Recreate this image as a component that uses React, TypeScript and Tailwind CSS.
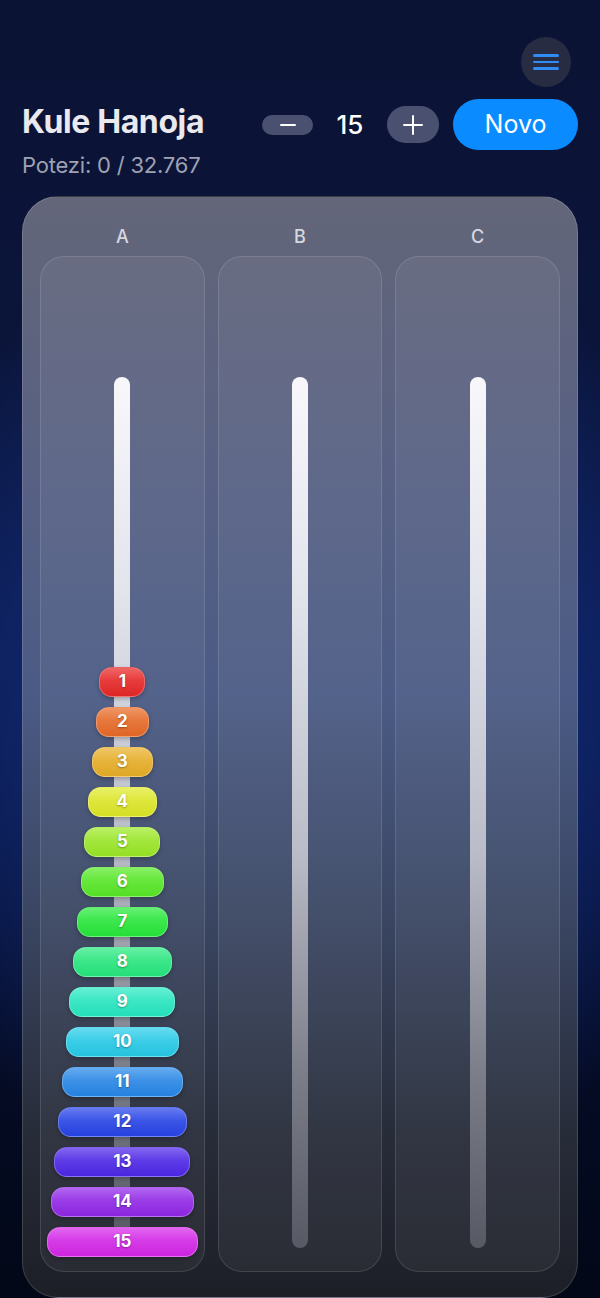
// Towers of Hanoi board: header with disc counter, three pegs, 15 discs on A.

const DISCS = Array.from({ length: 15 }, (_, i) => i + 1);
const PEGS = ["A", "B", "C"];

function Disc({ n }: { n: number }) {
  const hue = (n - 1) * 21;
  const width = 46 + (n - 1) * 7.5;
  return (
    <div
      className="relative flex h-[30px] items-center justify-center rounded-[13px] border text-[17px] font-bold text-white [text-shadow:0_1px_2px_rgba(0,0,0,0.35)]"
      style={{
        width,
        background: `linear-gradient(to bottom, hsl(${hue} 82% 67%), hsl(${hue} 78% 57%) 45%, hsl(${hue} 74% 51%))`,
        borderColor: `hsl(${hue} 85% 72% / 0.7)`,
        boxShadow: "0 2px 4px rgba(0,0,0,0.25)",
      }}
    >
      {n}
    </div>
  );
}

function Peg({ discs }: { discs: number[] }) {
  return (
    <div className="relative flex h-[1016px] flex-col items-center justify-end gap-[10px] rounded-[24px] border border-white/[0.12] bg-white/[0.05] pb-[14px]">
      {/* rod */}
      <div className="absolute left-1/2 top-[120px] bottom-[23px] w-4 -translate-x-1/2 rounded-full bg-[linear-gradient(to_bottom,#f8f8fb_0%,#e2e4ec_25%,#b9bcc7_55%,#7b7e89_80%,#575a64_100%)]" />
      {discs.map((n) => (
        <Disc key={n} n={n} />
      ))}
    </div>
  );
}

export default function App() {
  return (
    <div className="min-h-[1298px] w-full overflow-hidden bg-[radial-gradient(ellipse_75%_38%_at_50%_55%,#1a3a9a_0%,#112a78_45%,rgba(8,16,48,0)_100%),linear-gradient(to_bottom,#0b1334_0%,#0b1740_50%,#050c26_80%,#020817_100%)] px-[22px] pt-[37px] font-['Inter',sans-serif]">
      {/* ── Menu ── */}
      <div className="flex justify-end pr-[7px]">
        <button className="flex h-[50px] w-[50px] flex-col items-center justify-center gap-[4px] rounded-full bg-[#272c42]">
          <span className="h-[2.5px] w-[26px] rounded-full bg-[#2f8cf2]" />
          <span className="h-[2.5px] w-[26px] rounded-full bg-[#2f8cf2]" />
          <span className="h-[2.5px] w-[26px] rounded-full bg-[#2f8cf2]" />
        </button>
      </div>

      {/* ── Header ── */}
      <div className="mt-[12px] flex items-start justify-between">
        <div>
          <h1 className="mt-[4px] text-[32px] font-bold leading-[38px] tracking-[-0.4px] text-[#e9e9ee]">
            Kule Hanoja
          </h1>
          <p className="mt-[10px] text-[22px] leading-[28px] tracking-[-0.2px] text-[#9ea2b3]">
            Potezi: 0 / 32.767
          </p>
        </div>
        <div className="flex h-[51px] items-center">
          <button className="flex h-[20px] w-[51px] items-center justify-center rounded-full bg-[#4a5170]">
            <span className="h-[2px] w-[16px] rounded-full bg-white" />
          </button>
          <span className="w-[74px] text-center text-[26px] font-medium text-white">15</span>
          <button className="relative flex h-[37px] w-[52px] items-center justify-center rounded-full bg-[#4a5170]">
            <span className="h-[2px] w-[20px] rounded-full bg-white" />
            <span className="absolute h-[20px] w-[2px] rounded-full bg-white" />
          </button>
          <button className="ml-[14px] h-[51px] w-[125px] rounded-full bg-[#0a8bff] text-[25px] text-white">
            Novo
          </button>
        </div>
      </div>

      {/* ── Board ── */}
      <div className="mt-[17px] rounded-[36px] border border-white/[0.14] bg-[linear-gradient(to_bottom,#636679_0%,#586184_25%,#4b5b85_45%,#3a4663_65%,#272c39_85%,#1d1f27_100%)] px-[17px] pt-[30px] pb-[25px]">
        <div className="grid grid-cols-3 gap-[13px]">
          {PEGS.map((p) => (
            <div key={p} className="text-center text-[18px] font-medium leading-[20px] text-[#d6d8e0]">
              {p}
            </div>
          ))}
        </div>
        <div className="mt-[9px] grid grid-cols-3 gap-[13px]">
          <Peg discs={DISCS} />
          <Peg discs={[]} />
          <Peg discs={[]} />
        </div>
      </div>
    </div>
  );
}
